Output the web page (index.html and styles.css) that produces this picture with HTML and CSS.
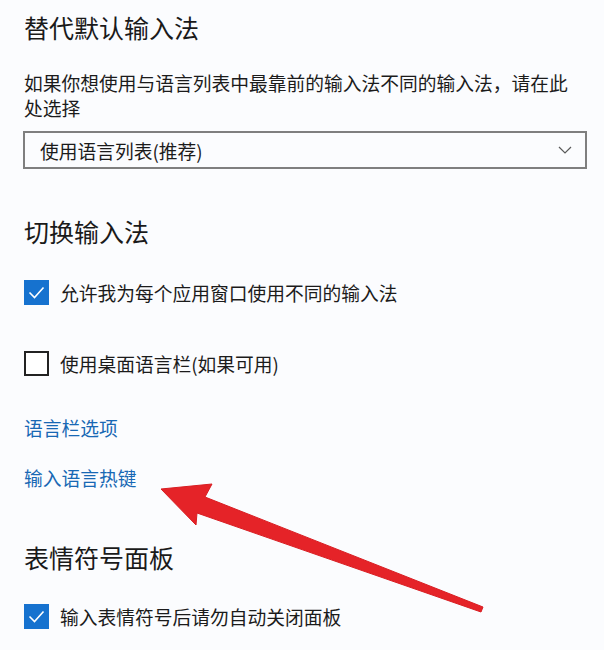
FILE: index.html
```html
<!DOCTYPE html>
<html lang="zh-CN">
<head>
<meta charset="utf-8">
<title>输入法设置</title>
<link rel="stylesheet" href="styles.css">
</head>
<body>
<main class="page">
  <h2 class="title t1">替代默认输入法</h2>
  <p class="desc">如果你想使用与语言列表中最靠前的输入法不同的输入法，请在此处选择</p>
  <div class="select">
    <span class="select-text">使用语言列表(推荐)</span>
    <svg class="chev" width="14" height="8" viewBox="0 0 14 8"><polyline points="1,1 7,7 13,1" fill="none" stroke="#5a5a5a" stroke-width="1.2"/></svg>
  </div>

  <h2 class="title t2">切换输入法</h2>
  <div class="check r1">
    <span class="box on"><svg width="25" height="25" viewBox="0 0 25 25"><polyline points="5.5,12.5 10.5,17.5 19.5,7.5" fill="none" stroke="#fff" stroke-width="1.6"/></svg></span>
    <span class="label">允许我为每个应用窗口使用不同的输入法</span>
  </div>
  <div class="check r2">
    <span class="box"></span>
    <span class="label">使用桌面语言栏(如果可用)</span>
  </div>

  <a class="link l1">语言栏选项</a>
  <a class="link l2">输入语言热键</a>

  <h2 class="title t3">表情符号面板</h2>
  <div class="check r3">
    <span class="box on"><svg width="25" height="25" viewBox="0 0 25 25"><polyline points="5.5,12.5 10.5,17.5 19.5,7.5" fill="none" stroke="#fff" stroke-width="1.6"/></svg></span>
    <span class="label">输入表情符号后请勿自动关闭面板</span>
  </div>
</main>
<svg class="arrow" width="604" height="650" viewBox="0 0 604 650">
  <polygon points="161,489 212,484 205,497 483,607 481,612 197,513 196,525" fill="#e52328" stroke="#d81d22" stroke-width="1" stroke-linejoin="round"/>
</svg>
</body>
</html>
```
FILE: styles.css
```css
html, body {
  margin: 0;
  padding: 0;
  background: #fbfcfe;
}
body {
  width: 604px;
  height: 650px;
  overflow: hidden;
  position: relative;
  font-family: "Noto Sans CJK SC", "Noto Sans", sans-serif;
  color: #1b1b1b;
}
.page {
  display: flex;
  flex-direction: column;
  align-items: flex-start;
  padding: 10px 0 0 24px;
}
.title {
  margin: 0;
  font-size: 25px;
  line-height: 34px;
  font-weight: 400;
  color: #1a1a1a;
}
.t2 { margin-top: 45px; }
.t3 { margin-top: 50px; }
.desc {
  margin: 26px 0 0;
  width: 560px;
  font-size: 18.75px;
  line-height: 25px;
}
.select {
  margin-top: 11px;
  margin-left: -1px;
  box-sizing: border-box;
  width: 564px;
  height: 38px;
  border: 2px solid #7f7f7f;
  display: flex;
  align-items: center;
  justify-content: space-between;
  padding: 0 13px 0 15px;
}
.select-text {
  font-size: 18.75px;
  line-height: 25px;
}
.chev { display: block; }
.check {
  display: flex;
  align-items: center;
  gap: 11px;
  height: 25px;
}
.r1 { margin-top: 32px; }
.r2 { margin-top: 46px; }
.r3 { margin-top: 30px; }
.box {
  box-sizing: border-box;
  width: 25px;
  height: 25px;
  border: 2px solid #222;
  background: #fff;
  flex: none;
}
.box.on {
  border: none;
  background: #1672cf;
}
.box svg { display: block; }
.label {
  font-size: 18.75px;
  line-height: 25px;
}
.link {
  font-size: 18.75px;
  line-height: 25px;
  color: #1868b4;
  text-decoration: none;
}
.l1 { margin-top: 39px; }
.l2 { margin-top: 25px; }
.arrow {
  position: absolute;
  left: 0;
  top: 0;
  pointer-events: none;
}
```
